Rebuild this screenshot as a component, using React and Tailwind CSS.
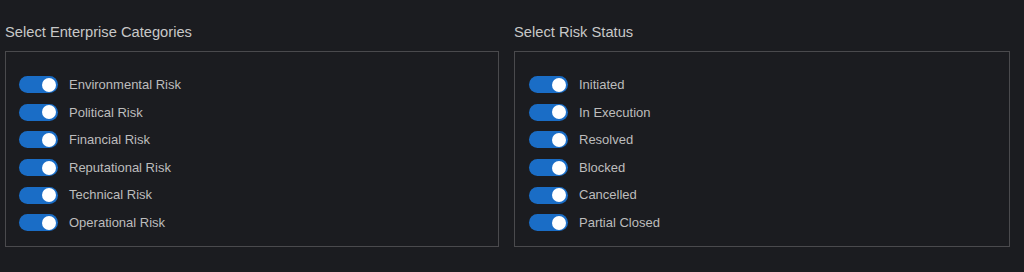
import React from "react";

const left = ["Environmental Risk","Political Risk","Financial Risk","Reputational Risk","Technical Risk","Operational Risk"];
const right = ["Initiated","In Execution","Resolved","Blocked","Cancelled","Partial Closed"];

function Toggle() {
  return (
    <div className="relative h-[17px] w-[39px] shrink-0 rounded-full bg-[#1a6dc6]">
      <div className="absolute right-[2px] top-[1.5px] h-[14px] w-[14px] rounded-full bg-white" />
    </div>
  );
}

function Panel({ title, items, pad }) {
  return (
    <div className="flex flex-col">
      <div className="h-[51px] pt-[23px] text-[14.7px] leading-[18px] text-[#c8c8c8]">{title}</div>
      <div className={`border border-[#4a4a4d] pt-[19px] pb-[9px] ${pad}`}>
        {items.map((t) => (
          <div key={t} className="flex h-[27.6px] items-center gap-[11px]">
            <Toggle />
            <span className="text-[13px] text-[#bdbdbd]">{t}</span>
          </div>
        ))}
      </div>
    </div>
  );
}

export default function App() {
  return (
    <div className="h-[272px] w-[1024px] bg-[#1b1c20] pl-[5px] font-['Liberation_Sans',Arial,sans-serif]">
      <div className="grid grid-cols-[494px_496px] gap-x-[15px]">
        <Panel title="Select Enterprise Categories" items={left} pad="pl-[13px]" />
        <Panel title="Select Risk Status" items={right} pad="pl-[14px]" />
      </div>
    </div>
  );
}
